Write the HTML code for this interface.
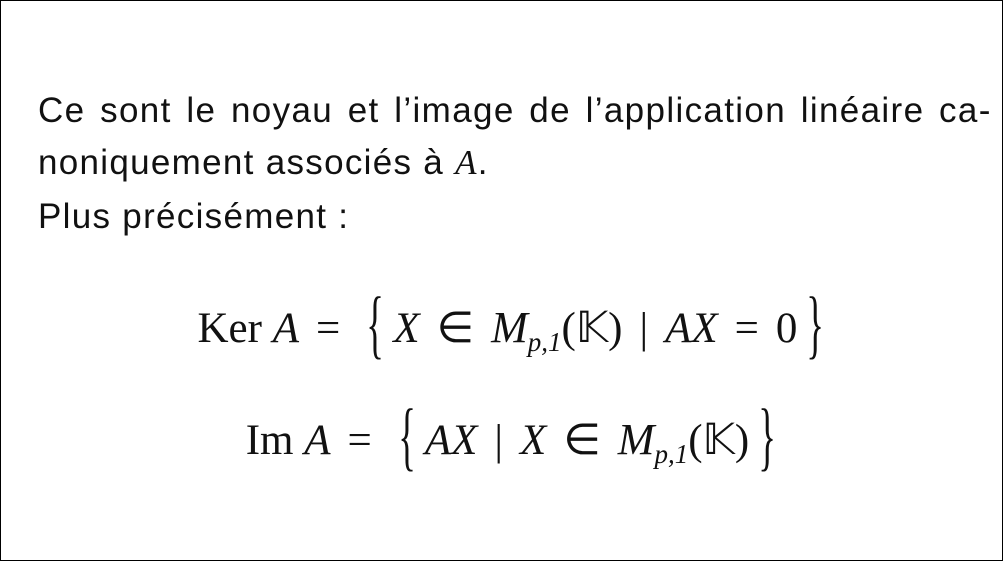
<!DOCTYPE html>
<html><head><meta charset="utf-8"><style>
body{margin:0;width:1003px;height:561px;background:#fff;position:relative;overflow:hidden}
.frame{position:absolute;left:0;top:0;width:1001px;height:559px;border:1px solid #000}
.t{position:absolute;left:38px;font-family:"Liberation Sans",sans-serif;font-size:35px;line-height:1;color:#111;white-space:nowrap;letter-spacing:1.3px}
.m{position:absolute;left:14px;width:1003px;text-align:center;font-family:"Liberation Serif",serif;font-size:43px;line-height:1;color:#111;white-space:nowrap}
i{font-style:italic}
.b{font-size:46px;display:inline-block;transform:scale(0.8,1.65);position:relative;top:-2px;margin:0 7px}
sub{font-size:27px;font-style:italic;vertical-align:-9px}
.c{font-style:italic;font-size:44px}
.r{margin:0 17px}
</style></head><body>
<div class="frame"></div>
<div class="t" style="top:93px;word-spacing:3.6px;letter-spacing:1.35px">Ce sont le noyau et l’image de l’application linéaire ca-</div>
<div class="t" style="top:145px">noniquement associés à <i style="font-family:'Liberation Serif',serif">A</i>.</div>
<div class="t" style="top:199px">Plus précisément :</div>
<div class="m" style="top:304px">Ker <i>A</i><span class="r">=</span><span class="b">{</span><i>X</i><span class="r">∈</span><span class="c">M</span><sub>p,1</sub>(𝕂)<span class="r">|</span><i>AX</i><span class="r">=</span>0<span class="b">}</span></div>
<div class="m" style="top:416px">Im <i>A</i><span class="r">=</span><span class="b">{</span><i>AX</i><span class="r">|</span><i>X</i><span class="r">∈</span><span class="c">M</span><sub>p,1</sub>(𝕂)<span class="b">}</span></div>
</body></html>
